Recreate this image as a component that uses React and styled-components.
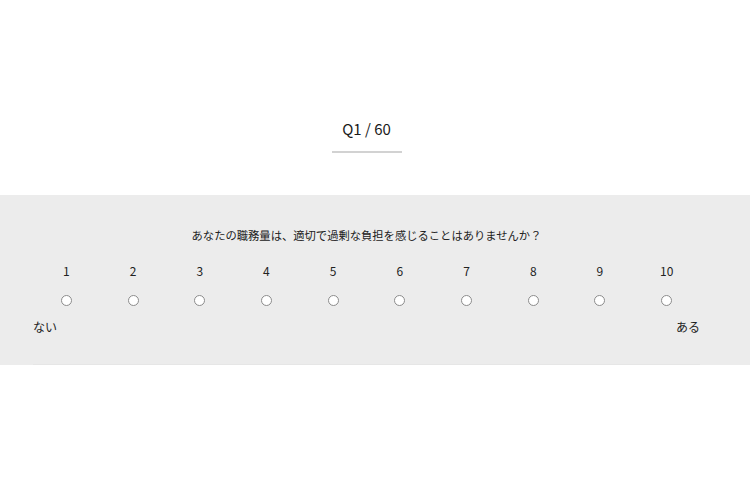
import React from "react";
import styled, { createGlobalStyle } from "styled-components";

const Global = createGlobalStyle`
  html, body { margin: 0; padding: 0; background: #fff; }
  body { font-family: "Noto Sans CJK JP", "Noto Sans", sans-serif; color: #222; }
`;

const Page = styled.div`
  width: 750px;
  height: 500px;
  display: flex;
  flex-direction: column;
`;

const Header = styled.div`
  height: 195px;
  display: flex;
  flex-direction: column;
  align-items: center;
  padding-left: 33px;
  width: 667px;
  box-sizing: content-box;
`;

const Counter = styled.div`
  margin-top: 118px;
  font-size: 15px;
  line-height: 22px;
  color: #1a1a1a;
  font-weight: 400;
`;

const Rule = styled.div`
  margin-top: 11px;
  width: 70px;
  height: 2px;
  background: #d2d2d2;
`;

const Band = styled.div`
  background: #ececec;
  height: 170px;
`;

const Inner = styled.div`
  margin-left: 33px;
  width: 667px;
  height: 100%;
  display: flex;
  flex-direction: column;
  border-bottom: 1px solid #e6e6e6;
  box-sizing: border-box;
`;

const Question = styled.div`
  margin-top: 31px;
  text-align: center;
  font-size: 11.3px;
  line-height: 18px;
  color: #222;
`;

const Scale = styled.div`
  margin-top: 18px;
  display: grid;
  grid-template-columns: repeat(10, 1fr);
`;

const Option = styled.label`
  display: flex;
  flex-direction: column;
  align-items: center;
  gap: 15px;
`;

const Num = styled.span`
  font-size: 12px;
  line-height: 18px;
  color: #222;
`;

const Radio = styled.span`
  width: 9px;
  height: 9px;
  border-radius: 50%;
  border: 1px solid #8c8c8c;
  background: #fff;
`;

const Ends = styled.div`
  margin-top: 12px;
  display: flex;
  justify-content: space-between;
  font-size: 12px;
  line-height: 18px;
  color: #222;
`;

export default function App() {
  const nums = [1, 2, 3, 4, 5, 6, 7, 8, 9, 10];
  return (
    <Page>
      <Global />
      <Header>
        <Counter>Q1 / 60</Counter>
        <Rule />
      </Header>
      <Band>
        <Inner>
          <Question>あなたの職務量は、適切で過剰な負担を感じることはありませんか？</Question>
          <Scale>
            {nums.map((n) => (
              <Option key={n}>
                <Num>{n}</Num>
                <Radio />
              </Option>
            ))}
          </Scale>
          <Ends>
            <span>ない</span>
            <span>ある</span>
          </Ends>
        </Inner>
      </Band>
    </Page>
  );
}
